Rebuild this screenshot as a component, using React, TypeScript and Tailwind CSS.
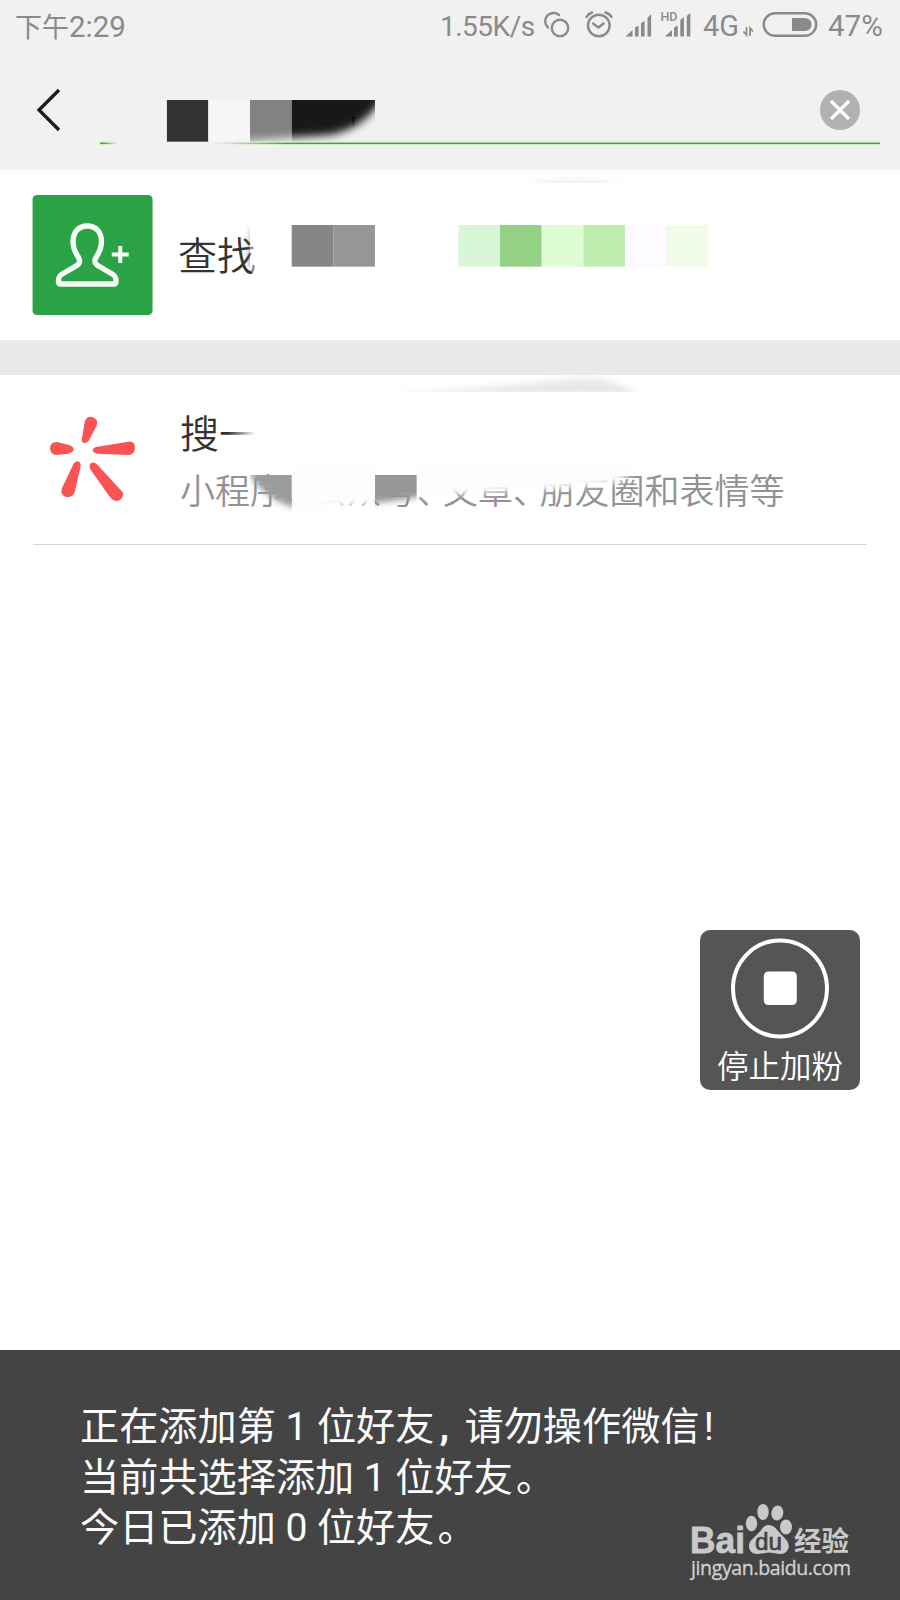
import type { ReactNode } from 'react';

// Side of one mosaic cell
const CELL = 41.67;

export default function App() {
  return (
    <div className="w-[900px] h-[1600px] flex flex-col overflow-hidden bg-white font-['Roboto','Noto_Sans_CJK_SC',sans-serif]">
      <header className="h-[170px] bg-[#f1f1f1] flex flex-col">
        <StatusBar />
        <SearchBar />
      </header>

      <main className="relative h-[1180px] flex flex-col">
        <FindRow />
        <div className="h-[35px] bg-[#eaeaea]" />
        <SearchRow />
        <div className="h-px mx-[33px] bg-[#d6d6d6]" />
        <StopButton />
      </main>

      <footer className="relative h-[250px] bg-[#444444] pl-[80px] pt-[52px] text-[39.2px] leading-[50.7px] text-[#fbfbfb] whitespace-nowrap">
        <p>
          正在添加第<Num>1</Num>位好友<span className="inline-block w-[30px] pl-[5px] font-bold">,</span>请勿操作微信<span className="pl-1">!</span>
        </p>
        <p>
          当前共选择添加<Num>1</Num>位好友<span className="pl-[3px]">。</span>
        </p>
        <p>
          今日已添加<Num>0</Num>位好友<span className="pl-[3px]">。</span>
        </p>
        <Watermark />
      </footer>
    </div>
  );
}

function Num({ children }: { children: ReactNode }) {
  return <span className="inline-block w-[41px] text-center">{children}</span>;
}

function StatusBar() {
  return (
    <div className="h-[52px] flex items-center pl-[15px] text-[#8a8a8a] whitespace-nowrap">
      <span className="w-[425px] text-[29.5px] pt-0.5">
        <span className="text-[27px]">下午</span>2:29
      </span>
      <span className="w-[99px] text-[28px] tracking-[-0.5px] pt-px">1.55K/s</span>
      <svg width="164" height="52" viewBox="539 0 164 52" fill="none" stroke="currentColor" strokeWidth="2.4">
        <path d="M548 27.5A8.3 8.3 0 1 1 559 15" strokeLinecap="round" />
        <circle cx="560" cy="28" r="8.2" />
        <circle cx="598.8" cy="25.5" r="10.8" />
        <path d="M593 23.5l5.5 4 5-4M586.500 17q2-3.500 5.500-4.500M605.500 12.500q4 1 6 4.500" strokeLinecap="round" />
        <g fill="currentColor" stroke="none">
          <path d="M625.500 36.500l7-6.500v6.500zM635 27.500l3.600-2v11H635zM641 23l3.600-2v15.500H641zM647.500 18l3.600-4v22.500h-3.600z" />
          <path d="M665 36.500l7-6.500v6.500zM674 27.500l3.800-2v11H674zM680.300 20l3.600-3v19.500h-3.600zM686.800 16l3.500-3v23.500h-3.500z" />
          <text x="660.5" y="21" className="text-[12px] font-medium" textLength="17" lengthAdjust="spacingAndGlyphs">
            HD
          </text>
        </g>
      </svg>
      <span className="w-[37px] text-[29px] pt-px">4G</span>
      <svg width="88" height="52" viewBox="740 0 88 52" fill="none" stroke="currentColor">
        <path d="M743.500 31.500l3 3.500v-8M750 36v-8l3 3.500" strokeWidth="1.700" />
        <rect x="763.700" y="13.300" width="52.500" height="22.500" rx="11.250" strokeWidth="2.400" />
        <path d="M792 18h13.500q6 1 6 6.500t-6 6.500H792z" fill="currentColor" stroke="none" />
      </svg>
      <span className="text-[29.5px] pt-px">47%</span>
    </div>
  );
}

function SearchBar() {
  return (
    <div className="relative h-[118px] flex items-start justify-between pl-9 pr-10">
      <svg className="mt-9" width="26" height="44" viewBox="36 88 26 44" fill="none">
        <path d="M59 90L39 110l20 20" stroke="#1b1b1b" strokeWidth="3.300" />
      </svg>
      <svg className="mt-[38px]" width="40" height="40" viewBox="0 0 40 40">
        <circle cx="20" cy="20" r="20" fill="#b1b1b1" />
        <path d="M11 11l18 18M29 11L11 29" stroke="#fff" strokeWidth="3.200" />
      </svg>
      <svg className="absolute left-[100px] top-[44px]" width="780" height="104" viewBox="100 96 780 104">
        <defs>
          <clipPath id="queryClip">
            <rect x="166.700" y="100" width="208.300" height="42" />
          </clipPath>
          <filter id="querySoft" x="-20%" y="-50%" width="140%" height="200%">
            <feGaussianBlur stdDeviation="4.500" />
          </filter>
          <linearGradient id="lineFade" gradientUnits="userSpaceOnUse" x1="100" x2="880" y1="0" y2="0">
            <stop offset="0" stopColor="#fff" />
            <stop offset="0.005" stopColor="#fff" />
            <stop offset="0.022" stopColor="#000" />
            <stop offset="0.145" stopColor="#000" />
            <stop offset="0.240" stopColor="#fff" />
            <stop offset="1" stopColor="#fff" />
          </linearGradient>
          <mask id="lineMask" maskUnits="userSpaceOnUse" x="100" y="138" width="780" height="10">
            <rect x="100" y="138" width="780" height="10" fill="url(#lineFade)" />
          </mask>
        </defs>
        <g clipPath="url(#queryClip)">
          <rect x="166.700" y="100" width={CELL} height={CELL} fill="#333333" />
          <rect x="208.300" y="100" width={CELL} height={CELL} fill="#f6f6f6" />
          <rect x="250" y="100" width={CELL} height={CELL} fill="#828282" />
          <rect x="291.700" y="100" width="83.400" height={CELL} fill="#181818" />
          <rect x="352" y="117" width="3" height="10" fill="#000" />
          <path d="M235 142Q300 137 330 135Q362 129 380 102H400V170H235Z" fill="#f1f1f1" filter="url(#querySoft)" />
        </g>
        <g mask="url(#lineMask)">
          <rect x="100" y="141.600" width="780" height="3.400" fill="#c9f0bb" />
          <rect x="100" y="142.700" width="780" height="1.300" fill="#55974a" />
        </g>
      </svg>
    </div>
  );
}

function FindRow() {
  return (
    <section className="relative h-[170px] flex items-center pl-[32px]">
      <svg width="121" height="120" viewBox="0 0 120.500 120" fill="none" stroke="#f5fff5">
        <rect x="0.300" width="120" height="120" rx="4.500" fill="#2ca246" stroke="none" />
        <path
          d="M55 31C45.500 31 40.800 38 40.800 46.500C40.800 55 44 58.500 46.500 63C48 66 48 68 44.500 70.500L30 79C26.500 81 26.300 82.500 26.300 85.500V87Q26.300 89 28.500 89H81.500Q83.700 89 83.700 87V85.500C83.700 82.500 83.500 81 80 79L65.500 70.500C62 68 62 66 63.500 63C66 58.500 69.200 55 69.200 46.500C69.200 38 64.500 31 55 31Z"
          strokeWidth="5.400"
        />
        <path d="M88 51v17M79.500 59.400h17" strokeWidth="4" />
      </svg>
      <span className="ml-[25px] text-[39px] leading-[56px] font-[350] text-[#333] pt-[3px]">查找</span>
      <svg className="absolute left-0 top-0" width="900" height="170" viewBox="0 170 900 170">
        <defs>
          <filter id="findSoft" x="-50%" y="-50%" width="200%" height="200%">
            <feGaussianBlur stdDeviation="4" />
          </filter>
          <clipPath id="findCell">
            <rect x="225" y="225" width="25" height="41.670" />
          </clipPath>
          <clipPath id="findTop">
            <rect x="490" y="170" width="230" height="13" />
          </clipPath>
        </defs>
        <g clipPath="url(#findCell)">
          <path d="M258 218Q248 240 252 272H264V218Z" fill="#777" filter="url(#findSoft)" />
        </g>
        <path d="M250 225h14v60q-8-4-14-16z" fill="#fff" fillOpacity="0.450" />
        <g clipPath="url(#findTop)">
          <path d="M520 188Q575 172 630 188Z" fill="#e9e9e9" filter="url(#findSoft)" />
        </g>
        <rect x="291.700" y="225" width={CELL} height={CELL} fill="#868686" />
        <rect x="333.300" y="225" width={CELL} height={CELL} fill="#969696" />
        <rect x="458.300" y="225" width={CELL} height={CELL} fill="#d9f6d7" />
        <rect x="500" y="225" width={CELL} height={CELL} fill="#94d185" />
        <rect x="541.700" y="225" width={CELL} height={CELL} fill="#defdd3" />
        <rect x="583.300" y="225" width={CELL} height={CELL} fill="#bfedb0" />
        <rect x="625" y="225" width={CELL} height={CELL} fill="#fdfbff" />
        <rect x="666.700" y="225" width={CELL} height={CELL} fill="#f0fce7" />
      </svg>
    </section>
  );
}

function Comma() {
  return <span className="inline-block w-[26.500px] [font-feature-settings:'halt']">、</span>;
}

function SearchRow() {
  return (
    <section className="relative h-[169px] flex items-center pl-12">
      <svg width="90" height="90" viewBox="144 165 270 270" fill="#f95353">
        <path d="M254 186Q260 168 276 171Q297 176 290 197L268 239Q261 252 250 248Q243 245 246 234Z" />
        <path d="M170 246Q151 246 150 265Q151 284 170 285L205 281Q221 277 221 268Q220 259 207 255Z" />
        <path d="M385 245Q405 243 405 264Q404 285 385 285L292 281Q278 278 278 270Q279 262 292 260Z" />
        <path d="M220 313Q227 300 238 306Q244 311 241 323L224 397Q218 413 199 411Q181 406 185 386Z" />
        <path d="M291 313Q280 303 271 311Q266 319 273 331L328 409Q340 426 356 422Q373 414 368 397Z" />
      </svg>
      <div className="ml-[42px] pt-2 whitespace-nowrap font-[350]">
        <div className="text-[39px] leading-[58px] text-[#333]">搜一</div>
        <div className="text-[35px] leading-[58px] text-[#929292]">
          小程序<Comma />公众号<Comma />文章<Comma />朋友圈和表情等
        </div>
      </div>
      <svg className="absolute left-0 top-0" width="900" height="169" viewBox="0 375 900 169">
        <defs>
          <linearGradient id="titleFade" x1="0" x2="1" y1="0" y2="0">
            <stop offset="0" stopColor="#fff" stopOpacity="0" />
            <stop offset="0.850" stopColor="#fff" />
          </linearGradient>
          <filter id="soft" x="-10%" y="-50%" width="120%" height="200%">
            <feGaussianBlur stdDeviation="3" />
          </filter>
          <clipPath id="topClip">
            <rect x="280" y="375" width="400" height="16.700" />
          </clipPath>
          <clipPath id="cellClip">
            <rect x="250" y="475" width={CELL} height="42" />
            <rect x="375" y="475" width={CELL} height="42" />
          </clipPath>
          <clipPath id="subClip">
            <rect x="291.700" y="468" width="83.300" height="60" />
            <rect x="416.700" y="468" width="223" height="60" />
          </clipPath>
        </defs>
        <g clipPath="url(#topClip)">
          <path d="M380 396Q500 387 560 380Q610 372 642 398Z" fill="#e8e8e8" filter="url(#soft)" />
        </g>
        <rect x="228" y="425" width="32" height="14" fill="url(#titleFade)" />
        <g clipPath="url(#subClip)">
          <path d="M270 455V508Q305 512 340 506L372 504Q405 506 418 496L440 495L510 491Q580 488 604 484Q630 482 646 455Z" fill="#fdfdfd" filter="url(#soft)" />
        </g>
        <g clipPath="url(#cellClip)">
          <path d="M246 468Q256 488 274 499Q284 505 300 510V460Z" fill="#9c9c9c" filter="url(#soft)" />
          <path d="M365 460V504Q402 500 425 496V460Z" fill="#969696" filter="url(#soft)" />
        </g>
      </svg>
    </section>
  );
}

function StopButton() {
  return (
    <div className="absolute left-[700px] top-[760px] w-40 h-40 rounded-[10px] bg-[#555555] flex flex-col items-center pt-2">
      <svg width="100" height="101" viewBox="0 0 100 101">
        <ellipse cx="50" cy="50.500" rx="47" ry="48" fill="none" stroke="#fff" strokeWidth="4" />
        <rect x="33.800" y="33.500" width="33" height="33.500" rx="4.500" fill="#fff" />
      </svg>
      <span className="text-[31.500px] leading-[44px] text-white mt-[7px] font-[350]">停止加粉</span>
    </div>
  );
}

function Watermark() {
  return (
    <svg className="absolute left-[680px] top-[145px]" width="190" height="95" viewBox="680 1495 190 95" fill="#c9c9c9">
      <text x="690" y="1553" className="font-['Liberation_Sans'] text-[36px] font-bold" textLength="55" lengthAdjust="spacingAndGlyphs" stroke="#c9c9c9" strokeWidth="0.800">
        Bai
      </text>
      <ellipse cx="751.500" cy="1523.500" rx="5.700" ry="7.700" />
      <ellipse cx="763" cy="1512" rx="5.700" ry="8" />
      <ellipse cx="777.300" cy="1513" rx="6" ry="7.500" transform="rotate(8 777.300 1513)" />
      <ellipse cx="786" cy="1527" rx="6" ry="7.500" />
      <path d="M768.500 1525Q774 1525 778 1531L785 1538.500Q789.500 1543 788.500 1548Q786.500 1554 780 1554L769 1552.500L757 1554Q750 1553.500 749 1547.500Q748.500 1542 753 1538.500L760.500 1531Q764 1525 768.500 1525Z" />
      <text x="755" y="1550" className="font-['Liberation_Sans'] text-[23px]" fill="#444" stroke="#444" strokeWidth="0.700" textLength="27" lengthAdjust="spacingAndGlyphs">
        du
      </text>
      <text x="794" y="1551" className="font-['Noto_Sans_CJK_SC',sans-serif] text-[27px] font-bold" textLength="55" lengthAdjust="spacingAndGlyphs">
        经验
      </text>
      <text x="691" y="1574.500" className="font-['Open_Sans'] text-[19.500px]" fill="#d2d2d2" stroke="#d2d2d2" strokeWidth="0.300" textLength="160" lengthAdjust="spacing">
        jingyan.baidu.com
      </text>
    </svg>
  );
}
